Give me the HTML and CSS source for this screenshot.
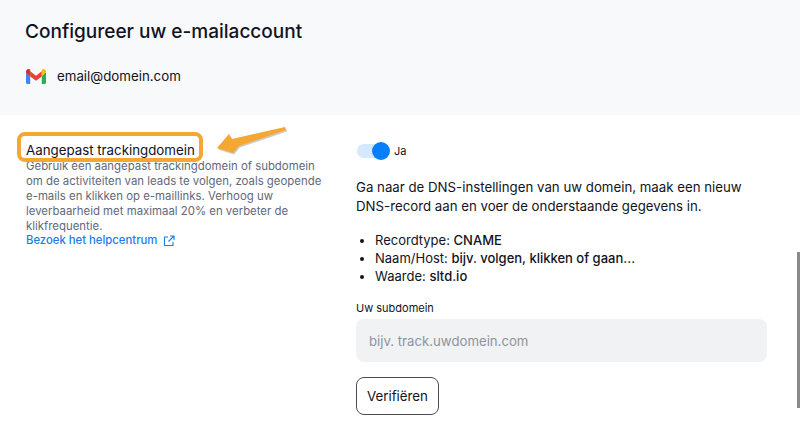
FILE: index.html
```html
<!DOCTYPE html>
<html>
<head>
	<meta charset="utf-8">
	<title>Configureer uw e-mailaccount</title>
	<link rel="stylesheet" href="styles.css">
</head>
<body>
<div class="page">
	<div class="top">
		<h1>Configureer uw e-mailaccount</h1>
		<div class="account">
			<svg class="gmail" width="20" height="15" viewBox="0 0 20 15">
				<path d="M0 3v10.500q0 1.500 1.500 1.500h2.700v-8z" fill="#4285f4"/>
				<path d="M20 3v10.500q0 1.500-1.500 1.500h-2.700v-8z" fill="#34a853"/>
				<path d="M4.200 7.500v-5.200l5.800 4.400 5.800-4.400v5.200l-5.800 4.300z" fill="#ea4335"/>
				<path d="M0 3.200v-.7c0-2.100 2.500-3.200 4.200-1.900v6.900z" fill="#c5372c"/>
				<path d="M20 3.200v-.7c0-2.100-2.500-3.200-4.200-1.900v6.900z" fill="#fbbc04"/>
			</svg>
			<span>email@domein.com</span>
		</div>
	</div>
	<div class="main">
		<div class="side">
			<h2>Aangepast trackingdomein</h2>
			<p>Gebruik een aangepast trackingdomein of subdomein om de activiteiten van leads te volgen, zoals geopende e-mails en klikken op e-maillinks. Verhoog uw leverbaarheid met maximaal 20% en verbeter de klikfrequentie.</p>
			<a class="help" href="#">Bezoek het helpcentrum
				<svg width="12" height="12" viewBox="0 0 12 12" fill="none" stroke="#1a7cf0" stroke-width="1.100">
					<path d="M5 2H1.500v8.500H10V7"/>
					<path d="M7 1h4v4M11 1 5.500 6.500"/>
				</svg>
			</a>
		</div>
		<div class="form">
			<div class="toggle">
				<span class="track"><span class="knob"></span></span>
				<span class="toggle-label">Ja</span>
			</div>
			<p class="intro">Ga naar de DNS-instellingen van uw domein, maak een nieuw DNS-record aan en voer de onderstaande gegevens in.</p>
			<ul>
				<li>Recordtype: <b>CNAME</b></li>
				<li>Naam/Host: <b>bijv. volgen, klikken of gaan...</b></li>
				<li>Waarde: <b>sltd.io</b></li>
			</ul>
			<label for="sub">Uw subdomein</label>
			<input id="sub" class="field" placeholder="bijv. track.uwdomein.com">
			<button class="verify" type="button">Verifiëren</button>
		</div>
	</div>
	<div class="callout"></div>
	<svg class="arrow" width="76" height="38" viewBox="0 0 76 38">
		<path d="M2 21 14 7 17 12 70 0 71 3 24 19 18 26z" fill="#6b6b6b" opacity=".35" transform="translate(1 1.500)"/>
		<path d="M2 21 14 7 17 12 70 0 71 3 24 19 18 26z" fill="#f5a733"/>
	</svg>
	<div class="scrollbar"></div>
</div>
</body>
</html>
```

FILE: styles.css
```css
*{box-sizing:border-box;}
body,h1,h2,p,ul{margin:0;padding:0;}
body{background:#fff;color:#111322;font:14px/20px Inter,"Noto Sans",sans-serif;overflow:hidden;}
.page{position:relative;width:800px;height:436px;overflow:hidden;}
.top{height:115px;background:#f8f9fb;padding:19px 26px 0;}
.top h1{margin-left:-1px;font-size:19.050px;line-height:26px;font-weight:500;}
.account{display:flex;align-items:center;gap:11px;margin-top:21px;font-size:13.300px;line-height:20px;}
.gmail{display:block;}
.main{display:flex;padding:0 33px 0 26px;}
.side{width:330px;padding-top:26px;}
.side h2{font-size:13.300px;line-height:18px;font-weight:400;}
.side p{width:305px;color:#62687a;font-size:11.400px;line-height:15px;}
.help{display:flex;align-items:center;gap:6px;margin-top:-1px;color:#1a7cf0;font-size:11.300px;line-height:15px;font-weight:500;text-decoration:none;}
.form{flex:1;padding-top:26px;}
.toggle{display:flex;align-items:center;gap:5px;height:20px;}
.track{display:block;width:32px;height:14px;margin-left:1px;border-radius:7px;background:#d6e8fd;position:relative;}
.knob{position:absolute;right:-1px;top:-2px;width:18px;height:18px;border-radius:50%;background:#087ffa;}
.toggle-label{font-size:11px;}
.intro{margin-top:17px;font-size:13.250px;line-height:19px;}
ul{margin-top:15px;padding-left:19px;font-size:13px;line-height:18px;}
b{font-weight:500;}
label{display:block;margin-top:15px;font-size:11px;line-height:16px;}
.field{display:block;width:411px;height:43px;margin-top:3px;padding:0 13px;border:0;border-radius:8px;background:#f1f2f4;font:13.200px Inter,"Noto Sans",sans-serif;}
.field::placeholder{color:#8f939e;opacity:1;}
.verify{display:block;width:83px;height:38px;margin-top:15px;padding:0;border:1px solid #4a4c55;border-radius:8px;background:#fff;color:#111322;font:13.300px Inter,"Noto Sans",sans-serif;}
.callout{position:absolute;left:17px;top:132px;width:186px;height:30px;border:4px solid #f5a733;border-radius:8px;}
.arrow{position:absolute;left:215px;top:127px;}
.scrollbar{position:absolute;left:797px;top:252px;width:3px;height:156px;background:#8a8a8a;}
```
